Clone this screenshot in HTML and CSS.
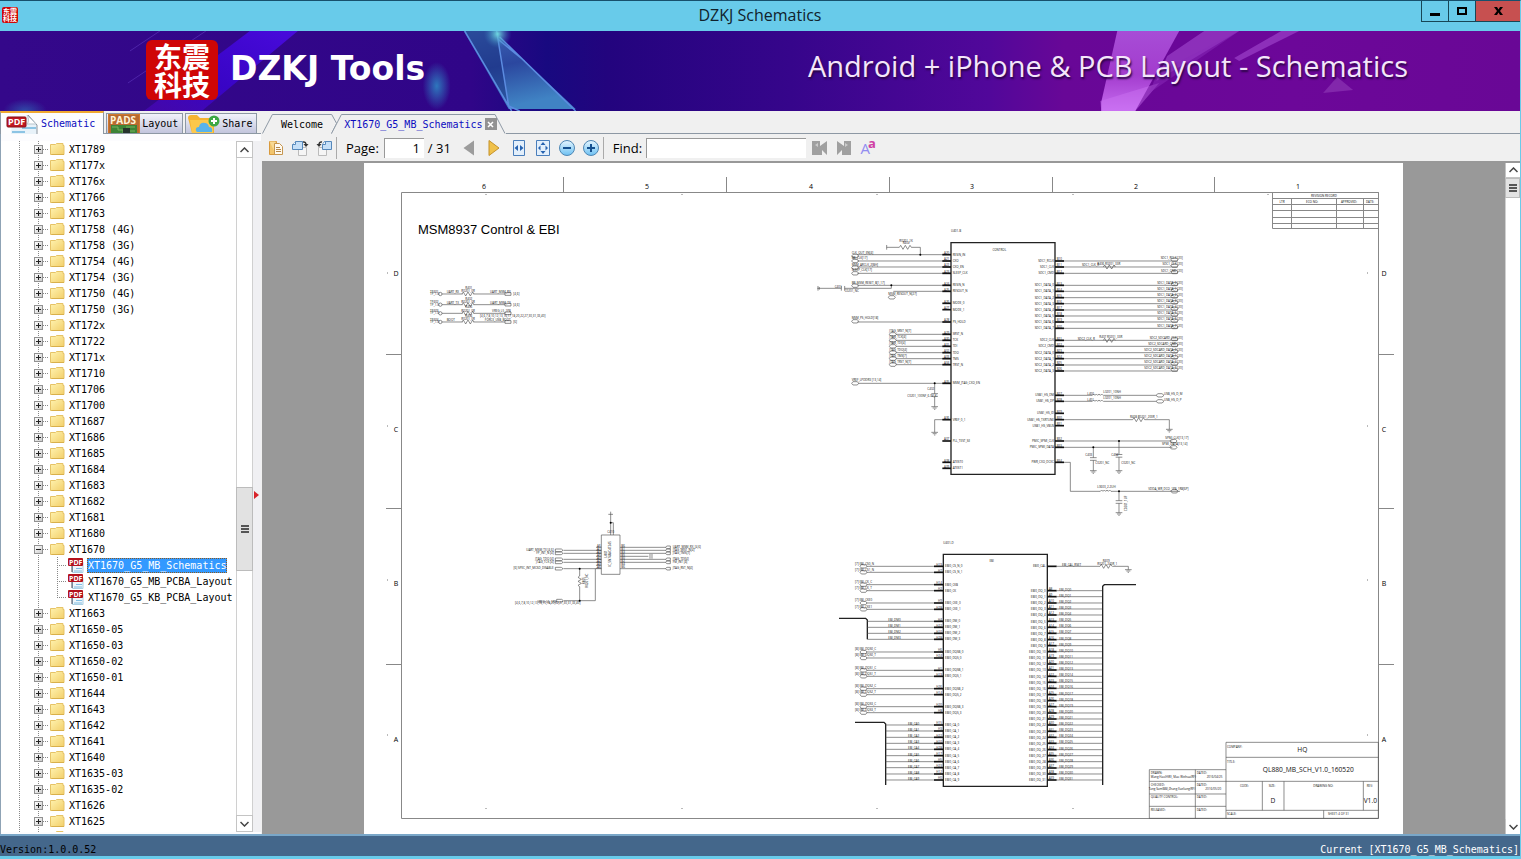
FILE: index.html
```html
<!DOCTYPE html>
<html lang="en">
<head>
<meta charset="utf-8">
<title>DZKJ Schematics</title>
<link rel="stylesheet" href="styles.css">
</head>
<body>
<svg class="defs" aria-hidden="true">
  <defs>
    <linearGradient id="gold" x1="0" y1="0" x2="1" y2="1"><stop offset="0" stop-color="#fff3b0"/><stop offset="1" stop-color="#f2cf6a"/></linearGradient>
    <linearGradient id="blue" x1="0" y1="0" x2="0" y2="1"><stop offset="0" stop-color="#e6f6ff"/><stop offset="1" stop-color="#6cc0f2"/></linearGradient>
    <symbol id="folder" viewBox="0 0 15 14"><path d="M.5 2.500h5l1-1h6.500v2h1v9H.5z" fill="url(#gold)" stroke="#e6c367"/><path d="M1.500 12.500h12.500" stroke="#d9b04b"/></symbol>
    <symbol id="pdf" viewBox="0 0 16 16"><path d="M4.500 1.500h7l3.500 4v10H4.500z" fill="#edf6fb" stroke="#a9cfe3"/><path d="M8 11.500h6M6 14h8" stroke="#7fbce2"/><path d="M4 9v6" stroke="#445"/><rect x="0" y="1" width="15" height="8" rx="1" fill="#b3121d"/><text x="1" y="8" font-size="7" font-weight="700" fill="#fff">PDF</text></symbol>
  </defs>
</svg>
<div class="window">
  <header class="titlebar">
    <span class="app-icon"><span>东震</span><span>科技</span></span>
    <h1>DZKJ Schematics</h1>
    <div class="caption">
      <button aria-label="Minimize"><svg width="10" height="10"><path d="M0 7h10v3H0z"/></svg></button>
      <button aria-label="Maximize"><svg width="10" height="8"><path d="M1 1h8v6H1z" fill="none" stroke="#000" stroke-width="2"/></svg></button>
      <button class="close" aria-label="Close"><svg width="9" height="8"><path d="M0 0h3l1.500 2.500L6 0h3L6 4l3 4H6L4.500 5.500 3 8H0l3-4z"/></svg></button>
    </div>
  </header>

  <section class="banner">
    <svg class="banner-art" viewBox="0 0 1521 80" preserveAspectRatio="none" aria-hidden="true">
      <defs>
        <linearGradient id="bg"><stop offset="0" stop-color="#34088a"/><stop offset=".31" stop-color="#300588"/><stop offset=".36" stop-color="#180980"/><stop offset=".4" stop-color="#23047e"/><stop offset=".52" stop-color="#36058b"/><stop offset=".65" stop-color="#51079a"/><stop offset=".7" stop-color="#680797"/><stop offset=".85" stop-color="#6c0799"/><stop offset="1" stop-color="#690796"/></linearGradient>
        <linearGradient id="beam" x1="1" y1="0" x2="0" y2="1"><stop offset="0" stop-color="#4a0be0" stop-opacity=".95"/><stop offset=".6" stop-color="#3a04d4" stop-opacity=".8"/><stop offset="1" stop-color="#5208c8" stop-opacity=".5"/></linearGradient>
        <linearGradient id="glass" x1="0" y1="0" x2=".3" y2="1"><stop offset="0" stop-color="#3e67b8"/><stop offset=".5" stop-color="#2b479f"/><stop offset="1" stop-color="#4083c4"/></linearGradient>
        <linearGradient id="pink" x1="0" y1="0" x2="0" y2="1"><stop offset="0" stop-color="#a74dd6"/><stop offset=".55" stop-color="#a33cce"/><stop offset="1" stop-color="#c66cf0"/></linearGradient>
        <radialGradient id="glow"><stop offset="0" stop-color="#2e77bd"/><stop offset="1" stop-color="#2e77bd" stop-opacity="0"/></radialGradient>
        <radialGradient id="spark"><stop offset="0" stop-color="#6ed7df"/><stop offset="1" stop-color="#367abd" stop-opacity="0"/></radialGradient>
      </defs>
      <rect width="1521" height="80" fill="url(#bg)"/>
      <path d="M250 0h48l-96 80h-58z" fill="url(#beam)"/>
      <path d="M206 0L128 52M160 0L130 20" stroke="#5a32b8" opacity=".7"/>
      <ellipse cx="437" cy="55" rx="14" ry="24" fill="url(#glow)"/>
      <ellipse cx="25" cy="80" rx="22" ry="12" fill="url(#glow)" opacity=".6"/>
      <path d="M464 0L509 78h67L500 6 496 0z" fill="url(#glass)"/>
      <path d="M496 0h1L509 76 464 0z" fill="#17307d" opacity=".5"/>
      <path d="M465 0L509 75 512 80M497 0L509 75 520 80M500 6L576 80M498 8L525 30" stroke="#5b8be0" stroke-width="1.500" fill="none"/>
      <ellipse cx="498" cy="3" rx="14" ry="14" fill="url(#spark)"/>
      <path d="M1118 0h62l-44 80h-34v-9z" fill="url(#pink)"/>
      <path d="M1101 70L1160 52 1136 80h-34z" fill="#cf78f4" opacity=".4"/>
      <path d="M1205 0h35L1157 50 1168 25zM1282 0h18l-60 30-5-3z" fill="#a34bd0" opacity=".6"/>
      <path d="M1240 0L1150 62l8-20z" fill="#8a2cba" opacity=".5"/>
      <path d="M1338 46l16 13-30 3z" fill="#8b35b3" opacity=".7"/>
    </svg>
    <div class="logo"><span>东震</span><span>科技</span></div>
    <strong class="brand">DZKJ Tools</strong>
    <p class="slogan">Android + iPhone &amp; PCB Layout - Schematics</p>
  </section>

  <main class="workspace">
    <aside class="sidebar">
      <nav class="side-tabs">
        <button class="side-tab active"><svg width="33" height="22" viewBox="0 0 33 22"><path d="M6 3h17l8 9v10H5z" fill="#e8f2f9"/><path d="M22 2l9 10v10" fill="none" stroke="#8b949c"/><path d="M21 2c2 4 2 7 0 9h9z" fill="#fff" stroke="#b8c4cc"/><path d="M16 15h14M6 19h13M6 22h10" stroke="#8cc4e4" stroke-width="2"/><rect x="1" y="4" width="19" height="10" rx="1" fill="#c01822" stroke="#8c0f17"/><text x="2" y="12" font-size="9" font-weight="700" fill="#fff">PDF</text></svg><span>Schematic</span></button>
        <button class="side-tab"><svg width="32" height="19" viewBox="0 0 32 19"><rect x=".5" y=".5" width="31" height="20" fill="#b86a30" stroke="#d0792e"/><rect x="3" y="11" width="26" height="8" fill="#3d8436"/><path d="M4 13h6v3h5v3M18 13h9M20 17h7" stroke="#79b35e" fill="none"/><rect x="15" y="14" width="7" height="5" fill="#26332c"/><text x="2" y="10" font-size="10" font-weight="700" fill="#fff3d8">PADS</text></svg><span>Layout</span></button>
        <button class="side-tab"><svg width="33" height="19" viewBox="0 0 33 19"><path d="M1 4q0-3 3-3h6l3 3h12q2 0 2 2v13H5z" fill="#f5b431"/><path d="M3 6h23v13H5z" fill="#fcc84b"/><path d="M9 17q-1-4 3-4 1-5 6-4 3 0 4 4 4 0 3 5H10z" fill="#58b3ea"/><circle cx="27" cy="7" r="5.500" fill="#3da845"/><path d="M27 4v6M24 7h6" stroke="#fff" stroke-width="2"/></svg><span>Share</span></button>
      </nav>
      <div class="tree-panel">
        <ul class="tree" id="tree"></ul>
        <div class="scrollbar tree-scroll">
          <button aria-label="Scroll up"><svg width="9" height="6"><path d="M.5 5L4.500 1l4 4" fill="none" stroke="#444" stroke-width="1.500"/></svg></button>
          <div class="track before"></div>
          <div class="thumb"><i></i></div>
          <div class="track after"></div>
          <button aria-label="Scroll down"><svg width="9" height="6"><path d="M.5 1L4.500 5l4-4" fill="none" stroke="#444" stroke-width="1.500"/></svg></button>
        </div>
        <div class="splitter"><svg width="5" height="8"><path d="M0 0l5 4-5 4z" fill="#d8232a"/></svg></div>
      </div>
    </aside>

    <section class="content">
      <nav class="doc-tabs">
        <button class="doc-tab welcome"><svg class="tab-shape" viewBox="0 0 76 20" preserveAspectRatio="none"><path d="M.5 19.500L10.500.5h60l5 9-5 10" fill="#f0f0f0" stroke="#8d98a4"/></svg><span>Welcome</span></button>
        <div class="doc-tab current"><svg class="tab-shape" viewBox="0 0 176 20" preserveAspectRatio="none"><path d="M.5 19.500L10.500.5h155l10 19" fill="#f0f0f0" stroke="#8d98a4"/></svg><button class="tab-name">XT1670_G5_MB_Schematics</button><button class="tab-close" aria-label="Close tab"><svg width="7" height="7"><path d="M1 1l5 5M6 1L1 6" stroke="#fff" stroke-width="1.500"/></svg></button></div>
        <span class="tab-fill"></span>
      </nav>
      <div class="toolbar">
        <button aria-label="Copy"><svg width="16" height="16"><path d="M1.500 1.500h7v13h-7z" fill="#f2c56c" stroke="#d99a3c"/><path d="M1.500 1.500h6v12" fill="#f8d993"/><path d="M6.500 3.500h5l3 3v8h-8z" fill="#fffaf0" stroke="#c59650"/><path d="M8 7.500h4M8 9.500h5M8 11.500h5" stroke="#b4884a"/></svg></button>
        <button aria-label="Rotate right"><svg width="17" height="16"><path d="M6.500 7.500h8v8h-8z" fill="#f5f5f5" stroke="#bbb"/><path d="M3.500 1.500h7v8h-10v-5z" fill="#c6e0f8" stroke="#5688bb"/><path d="M.5 4.500h3v-3" fill="#fff" stroke="#5688bb"/><path d="M11 2q3-.5 3 3" fill="none" stroke="#333" stroke-width="1.500"/><path d="M11.500 4h5L14 7z" fill="#333"/></svg></button>
        <button aria-label="Rotate left"><svg width="17" height="16"><path d="M2.500 7.500h8v8h-8z" fill="#f5f5f5" stroke="#bbb"/><path d="M8.500 1.500h7v8h-9v-5z" fill="#c6e0f8" stroke="#5688bb"/><path d="M6.500 4.500h3v-3" fill="#fff" stroke="#5688bb"/><path d="M6 2Q3 1.500 3 5" fill="none" stroke="#333" stroke-width="1.500"/><path d="M.5 4h5L3 7z" fill="#333"/></svg></button>
        <i class="divider"></i>
        <label class="page-label" for="page">Page:</label>
        <input id="page" class="page-input" type="text" value="1">
        <span class="page-total">/ 31</span>
        <button aria-label="Previous page"><svg width="12" height="16"><path d="M11 .5v15L.5 8z" fill="#9c9c9c"/></svg></button>
        <button class="next" aria-label="Next page"><svg width="12" height="16"><path d="M1 .5v15L11 8z" fill="#f0c14b" stroke="#c4922b"/></svg></button>
        <button aria-label="Fit width"><svg width="12" height="16"><path d="M.5.500h11v15H.5z" fill="#e3effb" stroke="#4a7ebb"/><path d="M5 5v6L1.500 8zM7 5v6l3.500-3z" fill="#2763b1"/></svg></button>
        <button aria-label="Fit page"><svg width="14" height="16"><path d="M.5.500h13v15H.5z" fill="#e3effb" stroke="#4a7ebb"/><path d="M7 2l2.500 3h-5zM7 14l2.500-3h-5zM2 8l2.500-2.500v5zM12 8L9.500 5.500v5z" fill="#2763b1"/></svg></button>
        <button aria-label="Zoom out"><svg width="16" height="16"><circle cx="8" cy="8" r="7.500" fill="url(#blue)" stroke="#4f87b4"/><path d="M4 8h8" stroke="#15508f" stroke-width="2"/></svg></button>
        <button aria-label="Zoom in"><svg width="16" height="16"><circle cx="8" cy="8" r="7.500" fill="url(#blue)" stroke="#4f87b4"/><path d="M4 8h8M8 4v8" stroke="#15508f" stroke-width="2"/></svg></button>
        <i class="divider"></i>
        <label class="find-label" for="find">Find:</label>
        <input id="find" class="find-input" type="text">
        <button aria-label="Find previous"><svg width="16" height="16"><path d="M0 1h8v5l7-5v14l-5-5v5H0z" fill="#a0a0a0"/><path d="M3 5l3-2v4z" fill="#ccc"/></svg></button>
        <button aria-label="Find next"><svg width="16" height="16"><path d="M1 1l7 5V1h7v14H6v-5l-5 5z" fill="#a0a0a0"/><path d="M12 5L9 3v4z" fill="#ccc"/></svg></button>
        <button class="match-case" aria-label="Match case"><span>A</span><sup>a</sup></button>
      </div>
      <div class="viewer">
        <div class="canvas"><svg class="sheet" id="sheet" viewBox="364 163 1039 671" role="img" aria-label="MSM8937 Control &amp; EBI schematic"></svg></div>
        <div class="scrollbar doc-scroll">
          <button aria-label="Page up"><svg width="9" height="6"><path d="M.5 5L4.500 1l4 4" fill="none" stroke="#444" stroke-width="1.500"/></svg></button>
          <div class="thumb"><i></i></div>
          <div class="track after"></div>
          <button aria-label="Page down"><svg width="9" height="6"><path d="M.5 1L4.500 5l4-4" fill="none" stroke="#444" stroke-width="1.500"/></svg></button>
        </div>
      </div>
    </section>
  </main>
  <footer class="status"><span>Version:1.0.0.52</span><span class="current-doc">Current [XT1670_G5_MB_Schematics]</span></footer>
</div>
<script src="app.js"></script>
</body>
</html>
```
FILE: styles.css
```css
* { box-sizing: border-box; }
body { margin: 0; font-family: "DejaVu Sans Mono", "Noto Sans CJK SC", monospace; font-size: 10px; color: #000; }
button { margin: 0; padding: 0; border: 0; background: none; font: inherit; color: inherit; display: flex; align-items: center; justify-content: center; }
svg { display: block; flex: none; }
svg text { font-family: "Open Sans", sans-serif; }
.defs { position: absolute; width: 0; height: 0; }
.window { display: flex; flex-direction: column; height: 100vh; overflow: hidden; background: #68cbea; border-top: 1px solid #17506c; border-right: 1px solid #68cbea; }

.titlebar { display: grid; grid-template-columns: 1fr auto 1fr; height: 30px; flex: none; }
.titlebar h1 { margin: 0 0 2px; align-self: center; font: 400 16px/20px "Open Sans", sans-serif; color: #10222c; }
.app-icon, .logo { display: flex; flex-direction: column; justify-content: center; align-items: center; background: #cf0606; color: #fff; font-family: "Noto Sans CJK SC", sans-serif; font-weight: 700; }
.app-icon { width: 16px; height: 16px; margin: 6px 2px; border-radius: 2px; font-size: 7px; line-height: 7px; }
.caption { display: flex; justify-self: end; height: 21px; border: solid #174656; border-width: 0 0 1px 1px; }
.caption button { width: 27px; border-right: 1px solid #174656; }
.caption button.close { width: 44px; background: #c75050; border: 0; }

.banner { position: relative; display: flex; align-items: center; height: 80px; flex: none; padding: 0 112px 2px 146px; color: #fff; overflow: hidden; }
.banner-art { position: absolute; inset: 0; width: 100%; height: 100%; }
.logo { position: relative; width: 72px; height: 60px; border-radius: 6px; font-size: 28px; line-height: 28px; flex: none; }
.brand { position: relative; margin: 0 0 2px 12px; font: 700 33px/40px "DejaVu Sans", sans-serif; white-space: nowrap; }
.slogan { position: relative; margin: 0 0 8px auto; font: 400 29px/36px "Open Sans", sans-serif; color: #f4e6fa; text-shadow: 1px 2px 2px #2a0545; white-space: nowrap; }

.workspace { display: flex; flex: 1; min-height: 0; background: #f0f0f0; }
.sidebar { display: flex; flex-direction: column; width: 261px; flex: none; }
.side-tabs { display: flex; gap: 2px; height: 23px; align-items: flex-end; border-bottom: 1px solid #8d98a4; }
.side-tab { height: 20px; gap: 2px; padding: 0 4px 0 1px; border: 1px solid #8d98a4; border-bottom: 0; background: linear-gradient(#f2f3fa, #c2c5dd); }
.side-tab.active { height: 23px; margin-bottom: -1px; padding: 0 8px 0 5px; background: #fdfdfe; border-top: 2px solid #f0a830; color: #0c0cc0; }
.tree-panel { display: flex; flex: 1; min-height: 0; padding: 7px 0 2px; background: #fcfcfe; border-left: 1px solid #8fa3b5; }
.tree { flex: 1; margin: 0; padding: 0; list-style: none; overflow: hidden; background:
  repeating-linear-gradient(#888 0 1px, transparent 1px 2px) 18px 0 / 1px 100% no-repeat,
  repeating-linear-gradient(#888 0 1px, transparent 1px 2px) 37px 0 / 1px 100% no-repeat, #fff; }
.row { display: flex; align-items: center; height: 16px; padding-left: 33px; white-space: nowrap; line-height: 14px; }
.toggle { width: 9px; height: 9px; border: 1px solid #919191; background: linear-gradient(135deg, #fff, #ccc); }
.stub { width: 6px; height: 1px; margin-right: 1px; background: repeating-linear-gradient(90deg, #888 0 1px, transparent 1px 2px); }
.row a { color: inherit; text-decoration: none; margin-left: 3px; padding: 1px 1px 0; }
.child { padding-left: 56px; background: repeating-linear-gradient(#888 0 1px, transparent 1px 2px) 56px 0 / 1px 100% no-repeat; }
.child.last { background-size: 1px 50%; }
.child .stub { width: 10px; }
.child a.selected { background: #3399ff; color: #fff; outline: 1px dotted #8a5a20; outline-offset: -1px; }
.scrollbar { display: flex; flex-direction: column; background: #fff; }
.scrollbar button { height: 17px; border: 1px solid #c4c4c4; background: #fff; flex: none; }
.thumb { display: flex; align-items: center; justify-content: center; background: #e2e2e2; border: 1px solid #bcbcbc; }
.thumb i { width: 8px; height: 8px; background: repeating-linear-gradient(#555 0 2px, transparent 2px 3px); }
.track { border-left: 1px solid #d0d0d0; border-right: 1px solid #d0d0d0; }
.tree-scroll { width: 17px; }
.tree-scroll .before { flex: 331; }
.tree-scroll .thumb { flex: 82; }
.tree-scroll .after { flex: 245; }
.splitter { width: 8px; display: flex; align-items: center; padding: 17px 0 0 1px; background: #f0f0f3; }

.content { display: flex; flex-direction: column; flex: 1; min-width: 0; padding-left: 1px; }
.doc-tabs { display: flex; height: 23px; padding-top: 3px; flex: none; }
.doc-tab { position: relative; display: flex; align-items: center; height: 20px; }
.doc-tab > * { position: relative; }
.doc-tab .tab-shape { position: absolute; inset: 0; width: 100%; height: 100%; }
.doc-tab.welcome { padding: 0 14px 0 19px; }
.doc-tab.current { margin-left: -6px; padding: 0 9px 0 13px; color: #0c0cc0; gap: 2px; }
.tab-close { width: 12px; height: 12px; background: #929292; }
.tab-fill { flex: 1; border-bottom: 1px solid #8d98a4; }
.toolbar { display: flex; align-items: center; height: 29px; padding-left: 2px; flex: none; border-bottom: 2px solid #989898; font: 400 13px/20px "Open Sans", sans-serif; }
.toolbar button { width: 24px; height: 24px; flex: none; }
.toolbar button.next { width: 26px; }
.toolbar .match-case { align-items: flex-start; font-size: 15px; line-height: 24px; color: #928df0; }
.match-case sup { margin-left: -2px; font-size: 13px; font-weight: 700; line-height: 14px; color: #cf3fa4; }
.divider { width: 1px; height: 22px; background: #aaa; }
.page-label, .find-label { margin: 0 5px 0 9px; }
.find-label { margin-right: 4px; }
.toolbar input { height: 20px; border: 0; border-top: 1px solid #999; border-left: 1px solid #999; background: #fff; font: inherit; padding: 0 4px; outline: 0; }
.toolbar .page-input { width: 40px; text-align: right; }
.toolbar .find-input { width: 160px; margin-right: 2px; }
.page-total { margin: 0 6px 0 4px; }
.viewer { display: flex; flex: 1; min-height: 0; background: #999; }
.canvas { flex: 1; min-width: 0; display: flex; justify-content: center; }
.sheet { height: 100%; max-width: 100%; background: #fff; }
.doc-scroll { width: 15px; }
.doc-scroll button { height: 15px; border-width: 0 0 1px 1px; }
.doc-scroll button:last-child { border-width: 0 0 0 1px; }
.doc-scroll .thumb { height: 20px; }
.doc-scroll .after { flex: 1; border-right: 0; }

.status { display: flex; justify-content: space-between; align-items: flex-end; height: 22px; margin-bottom: 3px; border-top: 2px solid #7aa7c8; flex: none; background: #44678b; line-height: 12px; }
.current-doc { color: #fff; padding-right: 1px; }

.wire { fill: none; stroke: #777; stroke-width: 1; }
.frame { fill: none; stroke: #888; stroke-width: 1; }
.sheet .heading { font: 13px "Liberation Sans", sans-serif; }
.z .wire { stroke: #555; stroke-width: 2; }
.z .dark { fill: none; stroke: #222; stroke-width: 4; }
.z .pin { stroke: #111; stroke-width: 5; }
.z text { font-size: 9px; fill: #111; }
.z .big { font-size: 20px; }
```
FILE: app.js
```js
const rows = ['XT1789','XT177x','XT176x','XT1766','XT1763','XT1758 (4G)','XT1758 (3G)','XT1754 (4G)','XT1754 (3G)','XT1750 (4G)','XT1750 (3G)','XT172x','XT1722','XT171x','XT1710','XT1706','XT1700','XT1687','XT1686','XT1685','XT1684','XT1683','XT1682','XT1681','XT1680','-XT1670','>XT1670_G5_MB_Schematics','>XT1670_G5_MB_PCBA_Layout','>XT1670_G5_KB_PCBA_Layout','XT1663','XT1650-05','XT1650-03','XT1650-02','XT1650-01','XT1644','XT1643','XT1642','XT1641','XT1640','XT1635-03','XT1635-02','XT1626','XT1625',''];
document.getElementById('tree').innerHTML = rows.map((r, i) => {
  if (r[0] === '>') {
    const last = rows[i + 1][0] !== '>' ? ' last' : '';
    const sel = rows[i - 1][0] === '-' ? ' class="selected"' : '';
    return `<li class="row child${last}"><i class="stub"></i><svg width="16" height="16"><use href="#pdf"/></svg><a href="#"${sel}>${r.slice(1)}</a></li>`;
  }
  const open = r[0] === '-';
  const name = open ? r.slice(1) : r;
  const sign = open ? 'M1 3.5h5' : 'M1 3.5h5M3.5 1v5';
  return `<li class="row"><button class="toggle" aria-label="Toggle"><svg width="7" height="7"><path d="${sign}" stroke="#222"/></svg></button><i class="stub"></i><svg width="15" height="14"><use href="#folder"/></svg>${name ? `<a href="#">${name}</a>` : ''}</li>`;
}).join('');

let out = '';
const P = (d, c = 'wire') => { out += `<path class="${c}" d="${d}"/>`; };
const T = (x, y, s, a = 'start', extra = '') => { out += `<text x="${x}" y="${y}" text-anchor="${a}" ${extra}>${s}</text>`; };
const group = (x, y, draw) => { out += `<g class="z" transform="translate(${x} ${y}) scale(.33333)">`; draw(); out += '</g>'; };
const zigH = (x, y) => P(`M${x} ${y}l4-6 7 12 7-12 7 12 7-12 4 6`);
const port = (x, y) => P(`M${x} ${y}l4-5h13l4 5-4 5h-13z`);
const gnd = (x, y) => P(`M${x - 10} ${y}h20M${x - 6} ${y + 4}h12M${x - 2} ${y + 8}h4`);
const dot = (x, y) => { out += `<circle cx="${x}" cy="${y}" r="3"/>`; };
const capV = (x, y, end) => { P(`M${x} ${y}V${(y + end) / 2 - 4}m-10 0h20m-20 8h20m-10 0V${end}`); gnd(x, end); dot(x, y); };

// sheet border and zone marks
P('M401.500 192.500H1378.500V818.500H401.500z', 'frame');
P('M563.500 177V192M726.500 177V192M889.500 177V192M1052.500 177V192M1214.500 177V192', 'frame');
P('M386 354.500h16M386 508.500h16M386 664.500h16M1378 354.500h16M1378 508.500h16M1378 664.500h16', 'frame');
[[484, 6], [647, 5], [811, 4], [972, 3], [1136, 2], [1298, 1]].forEach(([x, n]) => T(x, 189, n, 'middle', 'font-size="7"'));
[[276, 'D'], [432, 'C'], [586, 'B'], [742, 'A']].forEach(([y, s]) => { T(396, y, s, 'middle', 'font-size="7"'); T(1384, y, s, 'middle', 'font-size="7"'); });
P('M486 194v1M682 194v1M877 194v1M1073 194v1M1268 194v1M486 808v1M682 808v1M877 808v1M1073 808v1M387 273h1M387 426h1M387 580h1M387 735h1M1367 273h1M1367 426h1M1367 580h1M1367 735h1');
T(418, 234, 'MSM8937 Control &amp; EBI', 'start', 'class="heading"');
P('M1272.500 192.500h106v36h-106zM1272.500 198.500h106M1272.500 204.500h106M1272.500 210.500h106M1272.500 217.500h106M1272.500 223.500h106M1291.500 198.500v30M1336.500 198.500v30M1363.500 198.500v30', 'frame');
T(1324, 197, 'REVISION RECORD', 'middle', 'font-size="3"');
[[1282, 'LTR'], [1312, 'ECO NO:'], [1349, 'APPROVED:'], [1370, 'DATE:']].forEach(([x, s]) => T(x, 203, s, 'middle', 'font-size="3"'));

// test points and JTAG buffer
group(400, 270, () => {
  [[72, 'TP401', 'UART_RX', 'R401', 'UART_MSM_RX', '[4,6]'], [104, 'TP402', 'UART_TX', 'R402', 'UART_MSM_TX', '[4,6]'], [130, 'TP403', '', 'R403', 'VREG_L5_1P8', ''], [156, 'TP404', 'BOOT', 'R404', 'FORCE_USB_BOOT', '[6]']].forEach(([y, a, b, c, d, e]) => {
    P(`M126 ${y}H188M220 ${y}H315M315 ${y - 4}h18v8h-18z`); zigH(186, y);
    out += `<circle class="wire" cx="121" cy="${y}" r="5"/>`;
    T(90, y - 4, a); T(90, y + 3, 'TP_1.0'); T(140, y - 3, b); T(196, y - 15, c); T(184, y - 5, 'R0201_0R'); T(332, y - 3, d, 'end'); T(340, y + 3, e);
  });
  T(240, 142, '[4,6,7,8,10,12,13,16,17,18,20,22,27,30,31,33,40]', 'start');
  P('M604 795h56v118h-56z');
  P('M632 725v70M640 795v-37h-8M625 733h14'); dot(632, 758); T(632, 788, 'C410', 'middle');
  T(0, 0, 'U401', 'middle', 'transform="translate(622 852) rotate(-90)"');
  T(0, 0, 'IC_SN74AVC4T245', 'middle', 'transform="translate(634 852) rotate(-90)"');
  [[841, 'UART_MSM_TX [4,6]'], [850, 'FP_INT_N [4]'], [868, 'JTAG_TDO [4]'], [877, 'JTAG_TCK [4]'], [896, '[6] SPEC_INT_MCSD_DISABLE']].forEach(([y, s]) => { P(`M490 ${y}H604M466 ${y - 4}h18l5 4-5 4h-18z`); T(461, y + 1, s, 'end'); });
  [[832, 'UART_MSM_RX_[4,6]'], [841, 'JTAG_SRST_N[4]'], [850, 'JTAG_TMS[7]'], [868, 'JTAG_TDI[4]'], [877, 'FM_INT [4]'], [896, 'JTAG_RST_N[4]']].forEach(([y, s]) => { P(`M660 ${y}H796M796 ${y}l5-4h10v8h-10z`); T(818, y + 2, s); });
  P('M660 859h85M750 852v14M756 852v14');
  for (let y = 832; y < 900; y += 9) { T(602, y, 'A' + (y % 7), 'end'); T(664, y, 'B' + (y % 7)); P(`M588 ${y}h16`); }
  P('M539 896v22l-5 4 10 6-10 6 10 6-10 6 5 4v42M492 992h94V896'); dot(539, 896); dot(539, 992);
  T(0, 0, 'R405', 'middle', 'transform="translate(554 932) rotate(-90)"');
  T(0, 0, 'R0201_NC', 'middle', 'transform="translate(563 932) rotate(-90)"');
  P('M470 988h15l5 4-5 4h-15z'); T(468, 998, 'VREG_L5_1P8', 'end'); T(345, 1003, '[4,6,7,8,10,12,13,16,17,18,20,22,27,30,31,33,40]');
});

// control block
group(810, 220, () => {
  P('M423 68H735V763H423z', 'dark');
  T(423, 37, 'U401-B'); T(568, 92, 'CONTROL', 'middle');
  [[104, 'RESIN_IN', 142], [123, 'CXO', 142], [141, 'CXO_EN', 142], [160, 'SLEEP_CLK', 142], [196, 'RESIN_N', 142], [214, 'RESOUT_N', 250], [250, 'MODE_0'], [269, 'MODE_1'], [306, 'PS_HOLD', 142], [343, 'SRST_N', 258], [361, 'TCK', 258], [379, 'TDI', 258], [398, 'TDO', 258], [416, 'TMS', 258], [434, 'TRST_N', 258], [490, 'MSM_JTAG_CXO_EN', 145], [599, 'VREF_0_1', 374], [663, 'PLL_TEST_SE'], [727, 'ATEST0'], [745, 'ATEST1']].forEach(([y, s, x], i) => {
    if (x) P(`M${x} ${y}H423`);
    P(`M397 ${y}H423`, 'pin'); T(428, y + 3, s); T(418, y - 2, 'A' + (20 + i), 'end');
  });
  [[104, 'CLK_OUT_EN[4]', 125], [119, 'BB_CLK[17]', 125], [139, 'MSM_ARCLK_2[BH]', 125], [156, 'SLEEP_CLK[17]', 125], [193, 'BB_MSM_RESET_B[1,17]', 125], [228, 'MSM_RESOUT_N[27]', 235], [300, 'MSM_PS_HOLD[18]', 125], [339, 'JTAG_SRST_N[7]', 238], [357, 'JTAG_TCK[4]', 238], [375, 'JTAG_TDI[4]', 238], [394, 'JTAG_TDO[4]', 238], [412, 'JTAG_TMS[7]', 238], [430, 'JTAG_TRST_N[7]', 238], [486, 'VREF_LPDDR3 [13,14]', 125]].forEach(([y, s, x]) => { T(x, y - 2, s); port(x, y + 4); });
  P('M230 75v14M230 82h38M304 82h27v22'); zigH(268, 82); dot(331, 104); T(268, 65, 'R0201_1K'); T(278, 73, 'R402');
  P('M22 205h72M104 205h140v-9M94 198v14M104 198v14M24 198v14M28 201v8'); dot(244, 196); T(74, 203, 'C401'); T(104, 216, 'C0201_NC');
  capV(374, 490, 560); T(352, 509, 'C402'); T(292, 531, 'C0201_100NF_6.3V_K');
  P('M374 599v38'); gnd(374, 637);
  const right = [[123, 'SDC1_RCLK'], [141, 'SDC1_CLK'], [160, 'SDC1_CMD']];
  for (let i = 0; i < 8; i++) right.push([Math.round(196 + i * 18.4), 'SDC1_DATA_' + i]);
  right.push([361, 'SDC2_CLK'], [379, 'SDC2_CMD']);
  for (let i = 0; i < 4; i++) right.push([Math.round(398 + i * 18.4), 'SDC2_DATA_' + i]);
  right.forEach(([y, s]) => { P(`M735 ${y}H1104`); port(1083, y - 4); T(1118, y - 5, (y > 350 ? s.replace('SDC2', 'SDC2_SDCARD') : s) + ' [20]', 'end'); });
  zigH(880, 141); T(816, 139, 'SDC1_CLK_R'); T(862, 136, 'R406 R0201_33R'); zigH(880, 361); T(803, 360, 'SDC2_CLK_R'); T(868, 355, 'R407 R0201_33R');
  right.push([526, 'USB1_HS_DM'], [544, 'USB1_HS_DP'], [580, 'USB1_HS_ID'], [599, 'USB1_HS_TXRTUNE'], [617, 'USB1_HS_VBUS'], [663, 'PMIC_SPMI_CLK'], [682, 'PMIC_SPMI_DATA'], [727, 'PWR_CXO_DCXC']);
  right.forEach(([y, s], i) => { P(`M735 ${y}H762`, 'pin'); T(732, y + 3, s, 'end'); T(740, y - 2, 'B' + (i + 10)); });
  [526, 544].forEach((y, i) => { P(`M762 ${y}h85M880 ${y}h158M1038 ${y}l6-5h12l6 5-6 5h-12z`); P(`M847 ${y}q4-8 8 0q4-8 8 0q4-8 8 0q4-8 8 0`); T(832, y - 2, 'L40' + i); T(880, y - 6, 'L0201_10NH'); T(1062, y, i ? 'USB_HS_D_P' : 'USB_HS_D_M'); });
  P('M762 599h206M1004 599h74v29'); zigH(968, 599); gnd(1078, 628); T(960, 593, 'R408 R0201_200R_1');
  P('M762 663h325M762 682h325'); port(1080, 663); port(1080, 682); T(1066, 657, 'SPMI_CLK[13,17]'); T(1056, 675, 'SPMI_DATA[13,14]');
  capV(850, 682, 752); capV(927, 663, 752); T(826, 709, 'C403'); T(904, 709, 'C404'); T(856, 733, 'C0201_NC'); T(934, 733, 'C0201_NC');
  P('M762 727h19v87h90q4-8 8 0q4-8 8 0q4-8 8 0q4-8 8 0H1110'); port(1083, 814); T(862, 803, 'L0603_2.2UH'); T(1015, 810, 'VDDA_WR_DCO_1P8_1R8[6P]'); capV(927, 814, 878);
  T(0, 0, 'C0201_1UF', 'middle', 'transform="translate(950 850) rotate(-90)"');
});

// memory interface block
group(820, 530, () => {
  P('M370 73H682V769H370z', 'dark');
  T(370, 43, 'U401-D'); T(515, 97, 'EBI', 'middle');
  const pin = (y, s) => { P(`M342 ${y}H370`, 'pin'); T(375, y + 3, s); T(366, y - 2, 'H' + (y % 30), 'end'); };
  [[109, 'EBI0_CS_N_0', '[7] EBI_CS0_N'], [127, 'EBI0_CS_N_1', '[7] EBI_CS1_N'], [164, 'EBI0_CKB', '[7] EBI_CK_C'], [182, 'EBI0_CK', '[7] EBI_CK_T'], [219, 'EBI0_CKE_0', '[7] EBI_CKE0'], [238, 'EBI0_CKE_1', '[7] EBI_CKE1'], [366, 'EBI0_DQSB_0', '[8] EBI_DQS0_C'], [384, 'EBI0_DQS_0', '[8] EBI_DQS0_T'], [421, 'EBI0_DQSB_1', '[8] EBI_DQS1_C'], [439, 'EBI0_DQS_1', '[8] EBI_DQS1_T'], [476, 'EBI0_DQSB_2', '[8] EBI_DQS2_C'], [494, 'EBI0_DQS_2', '[8] EBI_DQS2_T'], [530, 'EBI0_DQSB_3', '[8] EBI_DQS3_C'], [548, 'EBI0_DQS_3', '[8] EBI_DQS3_T']].forEach(([y, s, n]) => { pin(y, s); P(`M140 ${y}H342`); port(120, y); T(105, y - 5, n); });
  P('M57 265h80l5 5v58M105 577h87l5 5v183', 'dark');
  for (let i = 0; i < 4; i++) { const y = 274 + i * 18; pin(y, 'EBI0_DM_' + i); P(`M142 ${y}H342`); T(205, y, 'EBI_DM' + i); }
  for (let i = 0; i < 10; i++) { const y = Math.round(585 + i * 18.33); pin(y, 'EBI0_CA_' + i); P(`M197 ${y}H342`); T(264, y, 'EBI_CA' + i); }
  P('M682 109h28', 'pin'); T(677, 112, 'EBI0_CAL', 'end'); P('M710 109h130M877 109h48v10'); zigH(840, 109); gnd(925, 119); T(726, 107, 'EBI_CAL_RSET'); T(832, 104, 'R0201_240R_1'); T(848, 96, 'R409');
  for (let i = 0; i < 32; i++) { const y = Math.round(182 + i * 18.33); P(`M682 ${y}h28`, 'pin'); T(677, y + 4, 'EBI0_DQ_' + i, 'end'); T(686, y - 2, 'A' + (i + 8)); T(718, y, 'EBI_DQ' + i); P(`M710 ${y}H848`); }
  P('M948 164H853l-5 5V765', 'dark');
});

// title block
group(1130, 730, () => {
  P('M288 37H745V265H288zM288 82H745M288 154H745M288 241H745M397 154V241M462 154V241M700 154V241M581 241V265M58 119H288M58 154H288M58 192H288M58 229H288M58 119V265H288M196 119V265');
  T(517, 66, 'HQ', 'middle', 'class="big"'); T(535, 126, 'QL880_MB_SCH_V1.0_160520', 'middle', 'class="big"'); T(429, 219, 'D', 'middle', 'class="big"'); T(721, 218, 'V1.0', 'middle', 'class="big"');
  [[291, 53, 'COMPANY:'], [291, 100, 'TITLE:'], [330, 172, 'CODE:'], [416, 172, 'SIZE:'], [550, 172, 'DRAWING NO:'], [710, 172, 'REV:'], [291, 256, 'SCALE:'], [594, 256, 'SHEET: 4 OF 31'], [62, 132, 'DRAWN:'], [62, 143, 'Wang Hao(HW), Mao Weihua(RF)'], [62, 167, 'CHECKED:'], [56, 180, 'Tang Sam(BB),Zhang Xueliang(RF)'], [62, 205, 'QUALITY CONTROL:'], [62, 242, 'RELEASED:'], [200, 132, 'DATED:'], [230, 144, '2016/04/25'], [200, 167, 'DATED:'], [226, 180, '2016/05/20'], [200, 205, 'DATED:'], [200, 242, 'DATED:']].forEach(([x, y, s]) => T(x, y, s));
});
document.getElementById('sheet').innerHTML = out;
```
